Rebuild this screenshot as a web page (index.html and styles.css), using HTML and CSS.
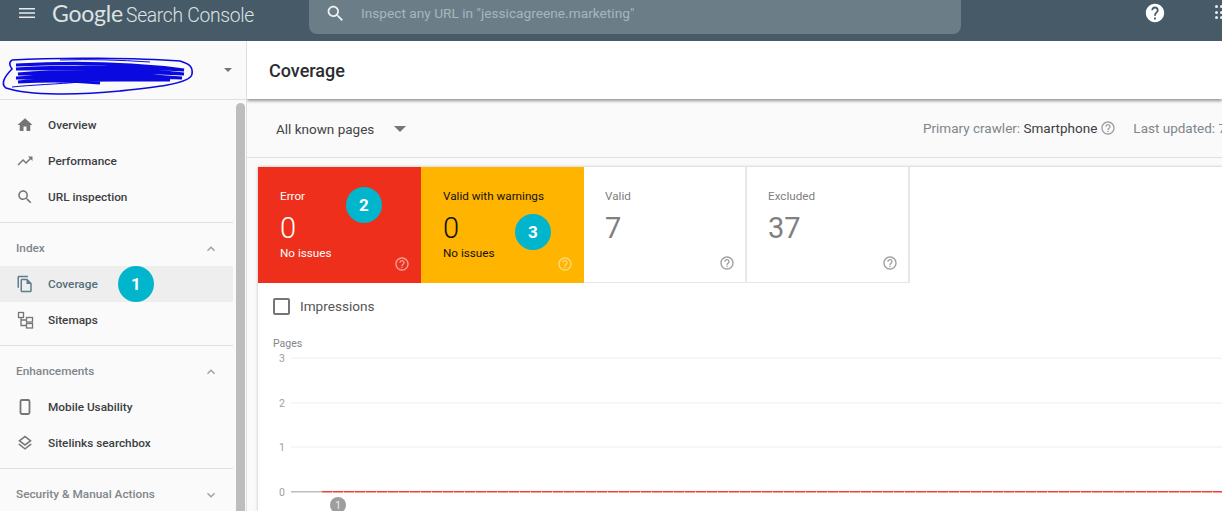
FILE: index.html
```html
<!DOCTYPE html>
<html lang="en">

<head>
    <meta charset="UTF-8">
    <meta name="viewport" content="width=device-width, initial-scale=1.0">
    <title>Coverage</title>
    <link rel="stylesheet" href="styles.css">
</head>

<body>
    <svg class="icon-defs" width="0" height="0">
        <symbol id="i-help" viewBox="0 0 24 24"><path d="M11 18h2v-2h-2v2zm1-16C6.48 2 2 6.48 2 12s4.48 10 10 10 10-4.48 10-10S17.52 2 12 2zm0 18c-4.41 0-8-3.59-8-8s3.59-8 8-8 8 3.59 8 8-3.59 8-8 8zm0-14c-2.21 0-4 1.79-4 4h2c0-1.1.9-2 2-2s2 .9 2 2c0 2-3 1.75-3 5h2c0-2.25 3-2.5 3-5 0-2.21-1.79-4-4-4z"/></symbol>
        <symbol id="i-less" viewBox="0 0 24 24"><path d="M12 8l-6 6 1.41 1.41L12 10.83l4.59 4.58L18 14z"/></symbol>
        <symbol id="i-more" viewBox="0 0 24 24"><path d="M16.59 8.59L12 13.17 7.41 8.59 6 10l6 6 6-6z"/></symbol>
        <symbol id="i-search" viewBox="0 0 24 24"><path d="M15.5 14h-.79l-.28-.27C15.41 12.59 16 11.11 16 9.5 16 5.91 13.09 3 9.5 3S3 5.91 3 9.5 5.91 16 9.5 16c1.61 0 3.09-.59 4.23-1.57l.27.28v.79l5 4.99L20.49 19l-4.99-5zm-6 0C7.01 14 5 11.99 5 9.5S7.01 5 9.5 5 14 7.01 14 9.5 11.99 14 9.5 14z"/></symbol>
    </svg>

    <header class="topbar">
        <svg class="menu-icon" viewBox="0 0 18 12"><path d="M1 1h16v1.6H1zM1 5.2h16v1.6H1zM1 9.4h16V11H1z"/></svg>
        <div class="logo"><span class="logo-google">Google</span> <span class="logo-product">Search Console</span></div>
        <div class="search">
            <svg class="search-icon"><use href="#i-search"/></svg>
            <span>Inspect any URL in "jessicagreene.marketing"</span>
        </div>
        <svg class="help-filled" viewBox="0 0 24 24"><path d="M12 2C6.48 2 2 6.48 2 12s4.48 10 10 10 10-4.48 10-10S17.52 2 12 2zm1 17h-2v-2h2v2zm2.07-7.75l-.9.92C13.45 12.9 13 13.5 13 15h-2v-.5c0-1.1.45-2.1 1.17-2.83l1.24-1.26c.37-.36.59-.86.59-1.41 0-1.1-.9-2-2-2s-2 .9-2 2H8c0-2.21 1.79-4 4-4s4 1.79 4 4c0 .88-.36 1.68-.93 2.25z"/></svg>
        <div class="apps"><i></i><i></i><i></i><i></i><i></i><i></i></div>
    </header>

    <div class="layout">
        <aside class="sidebar">
            <div class="property">
                <svg class="scribble" viewBox="0 0 196 58">
                    <path class="scribble-line" d="M12 19C60 16 140 17 180 20C190 23 193 26 192 33C191 43 150 47 120 50C80 54 30 55 6 47C0 43 5 35 12 28C9 24 9 21 12 19"/>
                    <path class="scribble-fill" d="M16 24C70 21 130 22 184 29C130 26 70 25 16 28C70 27 130 28 184 33C130 31 70 29 18 33C70 32 130 33 182 37C130 35 70 34 16 37C70 36 110 37 170 39C110 39 60 38 18 41C50 39 80 40 100 42"/>
                    <path class="scribble-thin" d="M12 46C30 44 60 43 80 41M60 19C90 18 120 19 150 21"/>
                </svg>
                <span class="caret"></span>
            </div>
            <div class="sidebar-body">
                <nav class="nav">
                    <div class="nav-group">
                        <a class="nav-item"><svg viewBox="0 0 24 24"><path d="M10 20v-6h4v6h5v-8h3L12 3 2 12h3v8z"/></svg>Overview</a>
                        <a class="nav-item"><svg viewBox="0 0 24 24"><path d="M16 6l2.29 2.29-4.88 4.88-4-4L2 16.59 3.41 18l6-6 4 4 6.3-6.29L22 12V6z"/></svg>Performance</a>
                        <a class="nav-item"><svg><use href="#i-search"/></svg>URL inspection</a>
                    </div>
                    <div class="nav-group">
                        <div class="nav-title">Index<svg><use href="#i-less"/></svg></div>
                        <a class="nav-item active"><svg viewBox="0 0 24 24"><path d="M16 1H4c-1.1 0-2 .9-2 2v14h2V3h12V1zm-1 4H8c-1.1 0-1.99.9-1.99 2L6 21c0 1.1.89 2 1.99 2H19c1.1 0 2-.9 2-2V11l-6-6zM8 21V7h6v5h5v9H8z"/></svg>Coverage<span class="badge badge-nav">1</span></a>
                        <a class="nav-item"><svg class="outline" viewBox="0 0 18 18"><path d="M5 6.500V14.500H10.500M5 9H10.500"/><rect x="2.500" y="1.500" width="5" height="5"/><rect x="10.500" y="6.500" width="6" height="4.500"/><rect x="10.500" y="12.500" width="6" height="4.500"/></svg>Sitemaps</a>
                    </div>
                    <div class="nav-group">
                        <div class="nav-title">Enhancements<svg><use href="#i-less"/></svg></div>
                        <a class="nav-item"><svg class="outline outline-thick" viewBox="0 0 18 18"><rect x="4.500" y="2" width="9" height="14" rx="1.500"/></svg>Mobile Usability</a>
                        <a class="nav-item"><svg viewBox="0 0 24 24"><path d="M11.99 18.54l-7.37-5.73L3 14.07l9 7 9-7-1.63-1.27zM12 16l7.36-5.73L21 9l-9-7-9 7 1.63 1.27L12 16zm0-11.47L17.74 9 12 13.47 6.26 9 12 4.53z"/></svg>Sitelinks searchbox</a>
                    </div>
                    <div class="nav-group">
                        <div class="nav-title">Security &amp; Manual Actions<svg><use href="#i-more"/></svg></div>
                    </div>
                </nav>
                <div class="scrollbar"><div class="scrollbar-thumb"></div></div>
            </div>
        </aside>

        <main class="main">
            <div class="titlebar">Coverage</div>
            <div class="filterbar">
                <div class="filter-select">All known pages<span class="caret"></span></div>
                <div class="filter-info">
                    <span>Primary crawler: <b>Smartphone</b></span>
                    <svg class="help"><use href="#i-help"/></svg>
                    <span class="updated">Last updated: 7</span>
                </div>
            </div>
            <div class="content">
                <section class="panel">
                    <div class="cards">
                        <div class="card card-error">
                            <div class="card-label">Error</div>
                            <div class="card-number">0</div>
                            <div class="card-note">No issues</div>
                            <svg class="help"><use href="#i-help"/></svg>
                            <span class="badge badge-error">2</span>
                        </div>
                        <div class="card card-warning">
                            <div class="card-label">Valid with warnings</div>
                            <div class="card-number">0</div>
                            <div class="card-note">No issues</div>
                            <svg class="help"><use href="#i-help"/></svg>
                            <span class="badge badge-warning">3</span>
                        </div>
                        <div class="card">
                            <div class="card-label">Valid</div>
                            <div class="card-number">7</div>
                            <svg class="help"><use href="#i-help"/></svg>
                        </div>
                        <div class="card">
                            <div class="card-label">Excluded</div>
                            <div class="card-number">37</div>
                            <svg class="help"><use href="#i-help"/></svg>
                        </div>
                    </div>
                    <label class="impressions"><span class="checkbox"></span>Impressions</label>
                    <div class="chart-title">Pages</div>
                    <svg class="chart" width="964" height="160" viewBox="258 351 964 160">
                        <g class="chart-grid">
                            <path d="M291 358H1222M291 403H1222M291 447H1222"/>
                        </g>
                        <g class="chart-axis">
                            <text x="285" y="362">3</text>
                            <text x="285" y="407">2</text>
                            <text x="285" y="451">1</text>
                            <text x="285" y="496">0</text>
                        </g>
                        <line class="chart-base" x1="291" y1="491.750" x2="322" y2="491.750"/>
                        <line class="chart-errors" x1="322" y1="491.750" x2="1222" y2="491.750"/>
                        <circle class="chart-pin" cx="338" cy="505" r="8"/>
                        <text class="chart-pin-text" x="338" y="509">1</text>
                    </svg>
                </section>
            </div>
        </main>
    </div>
</body>

</html>
```

FILE: styles.css
```css
* {
    box-sizing: border-box;
}

html,
body {
    height: 100%;
}

body {
    margin: 0;
    font-family: Roboto, "Liberation Sans", sans-serif;
    color: #3c4043;
    background-color: #fafafa;
    display: flex;
    flex-direction: column;
    overflow: hidden;
}

.icon-defs {
    position: absolute;
}

/* top bar */
.topbar {
    flex: none;
    height: 41px;
    background-color: #465b67;
    display: flex;
    align-items: flex-start;
    overflow: hidden;
}

.topbar>* {
    flex: none;
}

.menu-icon {
    width: 18px;
    height: 12px;
    margin: 7px 0 0 18px;
    fill: #e8ecee;
}

.logo {
    width: 257px;
    margin-left: 16px;
    color: #dde2e5;
    white-space: nowrap;
    line-height: 27px;
}

.logo-google {
    font-family: Lato, sans-serif;
    font-size: 23px;
    letter-spacing: -0.2px;
}

.logo-product {
    margin-left: -1px;
    font-size: 19.300px;
    font-weight: 300;
    letter-spacing: -0.3px;
}

.search {
    width: 652px;
    height: 34px;
    background-color: #6b7e88;
    border-radius: 0 0 8px 8px;
    display: flex;
    align-items: center;
    gap: 15px;
    padding: 0 0 8px 16px;
    font-size: 13.700px;
    color: #a9b6bc;
}

.search-icon {
    width: 21px;
    height: 21px;
    fill: #eef1f2;
}

.help-filled {
    width: 22px;
    height: 22px;
    margin: 2px 0 0 183px;
    fill: #fff;
}

.apps {
    display: grid;
    grid-template-columns: 3px 3px;
    gap: 2.500px 2px;
    margin: 5px 0 0 49px;
}

.apps i {
    width: 3px;
    height: 3px;
    border-radius: 50%;
    background-color: #e8ecee;
}

.layout {
    flex: 1;
    display: flex;
    min-height: 0;
}

/* sidebar */
.sidebar {
    flex: none;
    width: 247px;
    border-right: 1px solid #e0e0e0;
    background-color: #fafafa;
    display: flex;
    flex-direction: column;
}

.property {
    flex: none;
    height: 59px;
    border-bottom: 1px solid #e0e0e0;
    display: flex;
    align-items: flex-start;
    justify-content: space-between;
    padding-right: 14px;
}

.scribble {
    width: 196px;
    height: 58px;
    fill: none;
    stroke: #0a0ae0;
}

.scribble-line {
    stroke-width: 1.6;
}

.scribble-fill {
    stroke-width: 3.200;
}

.scribble-thin {
    stroke-width: 1;
}

.caret {
    display: inline-block;
    border-style: solid;
    border-width: 5px 5px 0;
    border-color: #757575 transparent transparent;
}

.property .caret {
    margin-top: 27px;
    border-width: 4px 4px 0;
}

.sidebar-body {
    flex: 1;
    display: flex;
    min-height: 0;
    overflow: hidden;
}

.nav {
    width: 233px;
    flex: none;
}

.nav-group {
    padding: 7px 0;
    border-bottom: 1px solid #e0e0e0;
}

.nav-group+.nav-group {
    padding-top: 0;
}

.nav-group:last-child {
    border-bottom: 0;
}

.nav-item {
    position: relative;
    height: 36px;
    display: flex;
    align-items: center;
    gap: 14px;
    padding-left: 16px;
    font-size: 11.800px;
    font-weight: 500;
    color: #3c4043;
}

.nav-item svg {
    width: 18px;
    height: 18px;
    fill: #757575;
}

.nav-item svg.outline {
    fill: none;
    stroke: #757575;
    stroke-width: 1.300;
}

.nav-item svg.outline-thick {
    stroke-width: 1.800;
}

.nav-item.active {
    background-color: #eeeeee;
    color: #546e7a;
}

.nav-item.active svg {
    fill: #607d8b;
}

.nav-title {
    height: 43px;
    display: flex;
    align-items: flex-start;
    justify-content: space-between;
    padding: 18px 14px 0 16px;
    font-size: 11.800px;
    line-height: 14px;
    font-weight: 500;
    color: #80868b;
}

.nav-title svg {
    width: 16px;
    height: 16px;
    fill: #9e9e9e;
}

.scrollbar {
    flex: 1;
    padding: 3px 1px 0 3px;
}

.scrollbar-thumb {
    height: 100%;
    background-color: #bdbdbd;
    border-radius: 5px 5px 0 0;
}

/* numbered marks drawn over the screenshot */
.badge {
    position: absolute;
    width: 36px;
    height: 36px;
    border-radius: 50%;
    background-color: #00b5cc;
    color: #fff;
    font-size: 17px;
    font-weight: 700;
    display: flex;
    align-items: center;
    justify-content: center;
}

.badge-nav {
    left: 118px;
    top: 0;
}

.badge-error {
    left: 88px;
    top: 20px;
}

.badge-warning {
    left: 94px;
    top: 47px;
}

/* main column */
.main {
    flex: 1;
    min-width: 0;
    display: flex;
    flex-direction: column;
    overflow: hidden;
}

.titlebar {
    position: relative;
    flex: none;
    height: 58px;
    padding-left: 22px;
    background-color: #fff;
    box-shadow: 0 2px 3px rgba(0, 0, 0, 0.4);
    font-size: 18px;
    font-weight: 500;
    line-height: 60px;
    color: #2b2e30;
}

.filterbar {
    flex: none;
    height: 59px;
    display: flex;
    align-items: center;
    border-bottom: 1px solid #e0e0e0;
    padding: 1px 0 0 29px;
    white-space: nowrap;
}

.filter-select {
    flex: none;
    width: 647px;
    font-size: 13.500px;
    color: #444;
    display: flex;
    align-items: center;
    gap: 20px;
}

.filter-select .caret {
    border-width: 6px 6px 0;
}

.filter-info {
    flex: none;
    display: flex;
    align-items: center;
    padding-bottom: 2px;
    font-size: 13.500px;
    color: #80868b;
}

.filter-info b {
    font-weight: 400;
    color: #3c4043;
}

.help {
    width: 16px;
    height: 16px;
    fill: #9e9e9e;
}

.filter-info .help {
    margin-left: 3px;
}

.updated {
    margin-left: 17px;
}

.content {
    flex: 1;
    min-height: 0;
    padding: 9px 0 0 11px;
}

.panel {
    height: 100%;
    width: 1000px;
    background-color: #fff;
    box-shadow: 0 0 3px rgba(0, 0, 0, 0.25);
}

.cards {
    display: flex;
    height: 116px;
}

.card {
    position: relative;
    width: 163px;
    padding: 22px 21px 0;
    border-right: 2px solid #e8e8e8;
    border-bottom: 1px solid #e8e8e8;
    color: #808080;
}

.card .help {
    position: absolute;
    right: 10px;
    bottom: 11px;
}

.card-label {
    font-size: 11.700px;
    line-height: 14px;
}

.card-number {
    margin-top: 7px;
    font-size: 29px;
    line-height: 36px;
}

.card-note {
    font-size: 11.700px;
    line-height: 14px;
}

.card-error,
.card-warning {
    padding-left: 22px;
    border: 0;
}

.card-error .card-number,
.card-warning .card-number {
    font-weight: 300;
}

.card-error {
    background-color: #ee2f1c;
    color: #fff;
}

.card-error .help {
    fill: #f6a49b;
    right: 11px;
}

.card-warning {
    background-color: #ffb400;
    color: #111;
}

.card-warning .help {
    fill: #ffdb7a;
    right: 11px;
}

.impressions {
    height: 46px;
    display: flex;
    align-items: center;
    gap: 10px;
    padding: 0 0 1px 15px;
    font-size: 13.600px;
    color: #555;
}

.checkbox {
    width: 17px;
    height: 17px;
    margin-top: 1px;
    border: 2px solid #757575;
    border-radius: 2px;
}

.chart-title {
    height: 22px;
    padding: 8px 0 0 15px;
    font-size: 10.500px;
    line-height: 13px;
    color: #80868b;
}

.chart {
    display: block;
    overflow: hidden;
}

.chart-grid path {
    fill: none;
    stroke: #eeeeee;
}

.chart-axis text {
    font-size: 10.500px;
    fill: #9e9e9e;
    text-anchor: end;
}

.chart-base {
    stroke: #bdbdbd;
    stroke-width: 1.500;
}

.chart-errors {
    stroke: #ee4035;
    stroke-width: 1.500;
    stroke-dasharray: 10.500 0.500;
}

.chart-pin {
    fill: #9e9e9e;
}

.chart-pin-text {
    font-size: 10px;
    fill: #eeeeee;
    text-anchor: middle;
}
```
